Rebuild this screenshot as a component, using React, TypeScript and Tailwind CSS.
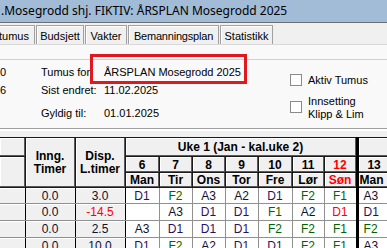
import React from "react";

const F = "font-['Liberation_Sans',Arial,sans-serif]";

type Cell = { t: string; c?: string };

const codeColor = (t: string) => {
  if (t.startsWith("F")) return "text-[#006400]";
  if (t.startsWith("D")) return "text-[#2a1060]";
  return "text-[#101030]";
};

const rows: { inng: string; disp: string; dispRed?: boolean; h: string; days: Cell[] }[] = [
  { inng: "0.0", disp: "3.0", h: "h-[16px]", days: [{ t: "D1" }, { t: "F2" }, { t: "A3" }, { t: "A2" }, { t: "D1" }, { t: "F2" }, { t: "F1" }, { t: "A3" }] },
  { inng: "0.0", disp: "-14.5", dispRed: true, h: "h-[17px]", days: [{ t: "" }, { t: "A3" }, { t: "D1" }, { t: "D1" }, { t: "F1" }, { t: "A2" }, { t: "D1", c: "text-[#ff0000]" }, { t: "D1" }] },
  { inng: "0.0", disp: "2.5", h: "h-[17px]", days: [{ t: "A3" }, { t: "D1" }, { t: "D1" }, { t: "D1" }, { t: "F2" }, { t: "F2" }, { t: "F1" }, { t: "F2" }] },
  { inng: "0.0", disp: "10.0", h: "h-[17px]", days: [{ t: "D1" }, { t: "F2" }, { t: "A2" }, { t: "D1" }, { t: "D1" }, { t: "F2" }, { t: "F1" }, { t: "A3" }] },
];

const nums = ["6", "7", "8", "9", "10", "11", "12"];
const days = ["Man", "Tir", "Ons", "Tor", "Fre", "Lør", "Søn"];
const widths = [34, 33, 33, 33, 34, 32, 33];

const H = "border border-[#1a1a1a] bg-[#f0f0f0] shadow-[inset_-1px_-1px_0_#5a5a5a,inset_1px_1px_0_#ffffff] p-0";

function Tab({ label, w, first }: { label: string; w: string; first?: boolean }) {
  return (
    <div
      className={`${w} h-[19px] flex items-center pt-[2px] border-t border-r border-[#a0a0a0] ${first ? "justify-end pr-[5px] -ml-[6px]" : "justify-center border-l"} bg-[#f0f0f0] text-[11px] text-black shadow-[inset_1px_1px_0_#ffffff] whitespace-nowrap shrink-0`}
    >
      {label}
    </div>
  );
}

export default function App() {
  return (
    <div className={`w-[387px] h-[248px] overflow-hidden bg-[#f0f0f0] ${F} text-black`}>
      {/* title bar */}
      <div className="h-[22px] bg-[#a2bbd6] flex items-center whitespace-nowrap overflow-hidden font-['Segoe_UI','Noto_Sans',sans-serif] text-[12px] text-black pl-[1px]">
        .Mosegrodd shj. FIKTIV: ÅRSPLAN Mosegrodd 2025
      </div>
      <div className="h-px bg-[#6e6e6e]" />
      {/* tabs */}
      <div className="h-[22px] flex items-end gap-[1px] bg-[#f0f0f0] border-b border-[#d9d9d9] overflow-hidden">
        <Tab label="tumus" w="w-[41px]" first />
        <Tab label="Budsjett" w="w-[48px]" />
        <Tab label="Vakter" w="w-[42px]" />
        <Tab label="Bemanningsplan" w="w-[91px] tracking-[-0.2px]" />
        <Tab label="Statistikk" w="w-[53px]" />
      </div>
      {/* info panel */}
      <div className="relative h-[83px] bg-[#f9f9f9] text-[11px]">
        <div className="h-[14px]" />
        <div className="border-t border-[#d0d0d0] flex pt-[3px]">
          <div className="w-[41px] flex flex-col">
            <div className="h-[18px] flex items-center">0</div>
            <div className="h-[18px] flex items-center">6</div>
          </div>
          <div className="w-[63px] flex flex-col">
            <div className="h-[18px] flex items-center">Tumus for</div>
            <div className="h-[19px] flex items-center">Sist endret:</div>
            <div className="h-[22px] flex items-center pt-[4px]">Gyldig til:</div>
          </div>
          <div className="w-[186px] flex flex-col">
            <div className="h-[18px] flex items-center">ÅRSPLAN Mosegrodd 2025</div>
            <div className="h-[19px] flex items-center">11.02.2025</div>
            <div className="h-[22px] flex items-center pt-[4px]">01.01.2025</div>
          </div>
          <div className="flex flex-col pt-[10px]">
            <div className="flex items-center gap-[6px] h-[14px]">
              <div className="w-[12px] h-[12px] border border-[#8a8a8a] bg-white" />
              <span>Aktiv Tumus</span>
            </div>
            <div className="flex items-start gap-[6px] mt-[8px]">
              <div className="w-[12px] h-[12px] border border-[#8a8a8a] bg-white mt-[6px]" />
              <div className="leading-[13px]">
                Innsetting
                <br />
                Klipp &amp; Lim
              </div>
            </div>
          </div>
        </div>
        <div className="absolute left-[90px] top-[9px] w-[157px] h-[30px] border-[3px] border-[#e0191e]" />
      </div>
      <div className="h-px bg-[#a0a0a0]" />
      <div className="h-[2px] bg-white" />
      <div className="h-[6px] bg-[#f0f0f0]" />
      {/* grid */}
      <table className="border-collapse table-fixed text-[12px] leading-[14px] bg-white" style={{ width: 400 }}>
        <colgroup>
          <col style={{ width: 25 }} />
          <col style={{ width: 50 }} />
          <col style={{ width: 50 }} />
          {widths.map((w, i) => (
            <col key={i} style={{ width: w }} />
          ))}
          <col style={{ width: 43 }} />
        </colgroup>
        <tbody>
          <tr className="h-[19px]">
            <td className={`${H} border-l-0`} />
            <td rowSpan={3} className={`${H} text-center font-bold leading-[13px]`}>
              Inng.
              <br />
              Timer
            </td>
            <td rowSpan={3} className={`${H} text-center font-bold leading-[13px]`}>
              Disp.
              <br />
              L.timer
            </td>
            <td colSpan={7} className={`${H} border-r-[3px] border-r-black text-center font-bold`}>
              Uke 1 (Jan - kal.uke 2)
            </td>
            <td className={H} />
          </tr>
          <tr className="h-[16px]">
            <td rowSpan={2} className={`${H} border-l-0`} />
            {nums.map((n, i) => (
              <td
                key={n}
                className={`${H} text-center font-bold ${i === 6 ? "text-[#ff0000] border-r-[3px] border-r-black" : ""}`}
              >
                {n}
              </td>
            ))}
            <td className={`${H} text-center font-bold pr-[10px]`}>13</td>
          </tr>
          <tr className="h-[15px]">
            {days.map((d, i) => (
              <td
                key={d}
                className={`${H} text-center font-bold ${i === 6 ? "text-[#ff0000] border-r-[3px] border-r-black" : ""}`}
              >
                {d}
              </td>
            ))}
            <td className={`${H} text-left font-bold pl-[1px]`}>Man</td>
          </tr>
          {rows.map((r, ri) => (
            <tr key={ri} className={r.h}>
              <td className="border border-[#909090] border-r-black border-l-0 bg-[#f0f0f0] shadow-[inset_0_1px_0_#ffffff]" />
              <td className="border border-[#909090] border-x-black bg-[#f0f0f0] shadow-[inset_0_1px_0_#ffffff] text-center p-0 text-[#101030]">
                {r.inng}
              </td>
              <td
                className={`border border-[#909090] border-x-black bg-[#f0f0f0] shadow-[inset_0_1px_0_#ffffff] text-center p-0 ${r.dispRed ? "text-[#ff0000]" : "text-[#101030]"}`}
              >
                {r.disp}
              </td>
              {r.days.map((d, di) => (
                <td
                  key={di}
                  className={`border border-[#909090] bg-white text-center p-0 ${d.c ?? codeColor(d.t)} ${di === 6 ? "border-r-[3px] border-r-black" : ""} ${di === 7 ? "text-left pl-[5px]" : ""}`}
                >
                  {d.t}
                </td>
              ))}
            </tr>
          ))}
        </tbody>
      </table>
    </div>
  );
}
